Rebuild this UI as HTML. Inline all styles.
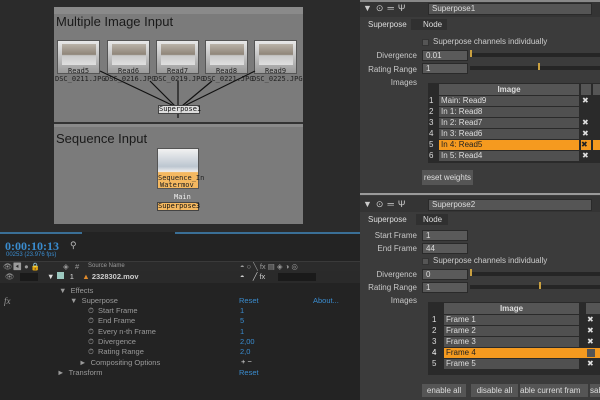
<!DOCTYPE html>
<html><head><style>
*{margin:0;padding:0;box-sizing:border-box}
body{width:600px;height:400px;overflow:hidden;background:#2e2e2e;font-family:"Liberation Sans",sans-serif;position:relative}
.a{position:absolute}
.t{position:absolute;white-space:nowrap}
.lbl{position:absolute;font-size:8px;color:#c8c8c8;text-align:right;width:60px;white-space:nowrap}
.fld{position:absolute;background:#5a5a5a;border:1px solid #2a2a2a;font-size:8px;color:#ddd;padding-left:3px;line-height:9px}
.thumb{position:absolute;width:43px;height:34px;background:linear-gradient(#e8e8e8,#9a9a9a);border:1px solid #555}
.thumb i{position:absolute;left:4px;top:3px;width:34px;height:21px;background:linear-gradient(#b9b2a8 0,#8f8579 50%,#c9c9c9 55%,#e0e0e0)}
.nl{position:absolute;font-family:"DejaVu Sans Mono",monospace;font-size:7px;color:#222;white-space:nowrap}
.row{position:absolute;height:10px;font-size:8px;color:#ddd;line-height:10px}
.ae{position:absolute;font-size:7.5px;color:#9a9a9a;white-space:nowrap}
.bl{color:#3a8ccf}
</style></head><body>
<!-- left top node graph -->
<div class="a" style="left:0;top:0;width:360px;height:232px;background:#2b2b2b"></div>
<div class="a" style="left:54px;top:7px;width:249px;height:115px;background:#7b7b7b;border-top:7px solid #8a8a8a"></div>
<div class="a" style="left:54px;top:122px;width:249px;height:2px;background:#333"></div>
<div class="a" style="left:54px;top:124px;width:249px;height:100px;background:#7b7b7b;border-top:3px solid #8a8a8a"></div>
<div class="t" style="left:56px;top:14px;font-size:13px;color:#1a1a1a">Multiple Image Input</div>
<div class="t" style="left:56px;top:131px;font-size:13px;color:#1a1a1a">Sequence Input</div>
<div class="thumb" style="left:57px;top:40px"><i></i></div>
<div class="thumb" style="left:107px;top:40px"><i></i></div>
<div class="thumb" style="left:156px;top:40px"><i></i></div>
<div class="thumb" style="left:205px;top:40px"><i></i></div>
<div class="thumb" style="left:254px;top:40px"><i></i></div>
<div class="nl" style="left:68px;top:67px">Read5</div>
<div class="nl" style="left:118px;top:67px">Read6</div>
<div class="nl" style="left:167px;top:67px">Read7</div>
<div class="nl" style="left:216px;top:67px">Read8</div>
<div class="nl" style="left:265px;top:67px">Read9</div>
<div class="nl" style="left:55px;top:75px">DSC_0211.JPG</div>
<div class="nl" style="left:105px;top:75px">DSC_0216.JPG</div>
<div class="nl" style="left:154px;top:75px">DSC_0219.JPG</div>
<div class="nl" style="left:203px;top:75px">DSC_0221.JPG</div>
<div class="nl" style="left:252px;top:75px">DSC_0225.JPG</div>
<svg class="a" style="left:0;top:0" width="360" height="232"><g stroke="#111" stroke-width="1.2"><line x1="100" y1="71" x2="174" y2="106"/><line x1="150" y1="81" x2="175" y2="106"/><line x1="178" y1="81" x2="178" y2="106"/><line x1="212" y1="81" x2="182" y2="106"/><line x1="255" y1="71" x2="184" y2="106"/><line x1="178" y1="113" x2="178" y2="118"/></g></svg>
<div class="a" style="left:158px;top:105px;width:42px;height:9px;background:#ddd;border:1px solid #444;font-size:7px;font-family:'DejaVu Sans Mono',monospace;color:#111;line-height:7px;text-align:center">Superpose1</div>
<div class="a" style="left:157px;top:148px;width:42px;height:41px;border:1px solid #555;background:linear-gradient(#f2f2f2 0,#bcc6d0 45%,#eee 58%,#f4b860 60%,#f4b860)"></div>
<div class="nl" style="left:158px;top:174px">Sequence_In</div>
<div class="nl" style="left:160px;top:181px">Watermov</div>
<div class="nl" style="left:174px;top:193px;color:#eee">Main</div>
<div class="a" style="left:157px;top:202px;width:42px;height:9px;background:#f4b860;border:1px solid #444;font-size:7px;font-family:'DejaVu Sans Mono',monospace;color:#111;line-height:7px;text-align:center">Superpose3</div>

<!-- bottom left AE -->
<div class="a" style="left:0;top:232px;width:360px;height:168px;background:#232323"></div>
<div class="a" style="left:0;top:232px;width:82px;height:2px;background:#3a6f96"></div>
<div class="a" style="left:175px;top:232px;width:185px;height:2px;background:#3a6f96"></div>
<div class="t bl" style="left:5px;top:239px;font-size:12px;font-weight:bold;font-family:'Liberation Serif',serif">0:00:10:13</div>
<div class="t bl" style="left:6px;top:252px;font-size:6px">00253 (23.976 fps)</div>
<div class="t" style="left:70px;top:240px;font-size:9px;color:#bbb">⚲</div>
<div class="a" style="left:0;top:261px;width:360px;height:10px;background:#2b2b2b;border-top:1px solid #3a3a3a"></div>
<div class="ae" style="left:3px;top:262px">👁◀ ● 🔒 &nbsp;&nbsp;&nbsp;&nbsp;&nbsp;&nbsp;&nbsp;&nbsp;&nbsp; ◈ &nbsp; #</div>
<div class="ae" style="left:88px;top:263px;font-size:6px">Source Name</div>
<div class="ae" style="left:240px;top:262px">◓ ○ ╲ fx ▤ ◈ ◑ ◎</div>
<div class="a" style="left:0;top:271px;width:360px;height:12px;background:#2a2a2a"></div>
<div class="a" style="left:20px;top:273px;width:18px;height:8px;background:#1a1a1a"></div>
<div class="ae" style="left:5px;top:272px">👁</div>
<div class="ae" style="left:47px;top:272px;color:#ddd">▼ <span style="display:inline-block;width:7px;height:7px;background:#9cc9c0"></span> &nbsp; 1 &nbsp;&nbsp; <span style="color:#e08a2a">▲</span> <b style="color:#ccc">2328302.mov</b></div>
<div class="ae" style="left:240px;top:272px;color:#ccc">◓ &nbsp;&nbsp; ╱ fx</div>
<div class="a" style="left:278px;top:273px;width:38px;height:8px;background:#1a1a1a"></div>
<div class="ae" style="left:59px;top:286px">▼ &nbsp;Effects</div>
<div class="ae" style="left:4px;top:296px;font-style:italic;font-family:'Liberation Serif',serif;font-size:9px">fx</div>
<div class="ae" style="left:70px;top:296px">▼ &nbsp;Superpose</div>
<div class="ae bl" style="left:239px;top:296px">Reset</div>
<div class="ae bl" style="left:313px;top:296px">About...</div>
<div class="ae" style="left:88px;top:306px">⏱ &nbsp;Start Frame</div><div class="ae bl" style="left:240px;top:306px">1</div>
<div class="ae" style="left:88px;top:316px">⏱ &nbsp;End Frame</div><div class="ae bl" style="left:240px;top:316px">5</div>
<div class="ae" style="left:88px;top:327px">⏱ &nbsp;Every n-th Frame</div><div class="ae bl" style="left:240px;top:327px">1</div>
<div class="ae" style="left:88px;top:337px">⏱ &nbsp;Divergence</div><div class="ae bl" style="left:240px;top:337px">2,00</div>
<div class="ae" style="left:88px;top:347px">⏱ &nbsp;Rating Range</div><div class="ae bl" style="left:240px;top:347px">2,0</div>
<div class="ae" style="left:79px;top:358px">► &nbsp;Compositing Options</div><div class="ae" style="left:241px;top:357px;color:#ddd">+ −</div>
<div class="ae" style="left:57px;top:368px">► &nbsp;Transform</div><div class="ae bl" style="left:239px;top:368px">Reset</div>

<!-- right panels -->
<div class="a" style="left:360px;top:0;width:240px;height:193px;background:#3b3b3b"></div>
<div class="a" style="left:360px;top:193px;width:240px;height:2px;background:#9a9a9a"></div>
<div class="a" style="left:360px;top:195px;width:240px;height:205px;background:#3b3b3b"></div>

<!-- panel 1 -->
<div class="a" style="left:360px;top:0;width:240px;height:17px;background:#343434;border-top:2px solid #888"></div>
<div class="t" style="left:363px;top:3px;font-size:9px;color:#ccc;letter-spacing:4px">▼⊙═Ψ</div>
<div class="fld" style="left:428px;top:3px;width:164px;height:12px;background:#555;line-height:10px">Superpose1</div>
<div class="a" style="left:411px;top:19px;width:36px;height:11px;background:#303030"></div>
<div class="t" style="left:368px;top:20px;font-size:8px;color:#ddd">Superpose</div>
<div class="t" style="left:423px;top:20px;font-size:8px;color:#ddd">Node</div>
<div class="a" style="left:422px;top:39px;width:7px;height:7px;background:#555;border:1px solid #333"></div>
<div class="t" style="left:433px;top:37px;font-size:8px;color:#ccc">Superpose channels individually</div>
<div class="lbl" style="left:357px;top:51px">Divergence</div>
<div class="fld" style="left:422px;top:50px;width:46px;height:11px">0.01</div>
<div class="lbl" style="left:357px;top:65px">Rating Range</div>
<div class="fld" style="left:422px;top:63px;width:46px;height:11px">1</div>
<div class="a" style="left:470px;top:53px;width:130px;height:4px;background:#252525"></div>
<div class="a" style="left:470px;top:66px;width:130px;height:4px;background:#252525"></div>
<div class="a" style="left:470px;top:50px;width:2px;height:7px;background:#c9a040"></div>
<div class="a" style="left:538px;top:63px;width:2px;height:7px;background:#c9a040"></div>
<div class="lbl" style="left:357px;top:78px">Images</div>
<div class="a" style="left:428px;top:83px;width:172px;height:80px;background:#2a2a2a"></div>
<div class="a" style="left:439px;top:84px;width:140px;height:11px;background:#555;font-size:8px;color:#ddd;text-align:center;font-weight:bold;line-height:11px">Image</div>
<div class="a" style="left:581px;top:84px;width:10px;height:11px;background:#555"></div>
<div class="a" style="left:593px;top:84px;width:7px;height:11px;background:#555"></div>
<div class="row" style="left:429px;top:96px">1</div><div class="row" style="left:439px;top:96px;width:140px;background:#505050;padding-left:2px">Main: Read9</div><div class="row" style="left:582px;top:96px">✖</div>
<div class="row" style="left:429px;top:107px">2</div><div class="row" style="left:439px;top:107px;width:140px;background:#505050;padding-left:2px">In 1: Read8</div>
<div class="row" style="left:429px;top:118px">3</div><div class="row" style="left:439px;top:118px;width:140px;background:#505050;padding-left:2px">In 2: Read7</div><div class="row" style="left:582px;top:118px">✖</div>
<div class="row" style="left:429px;top:129px">4</div><div class="row" style="left:439px;top:129px;width:140px;background:#505050;padding-left:2px">In 3: Read6</div><div class="row" style="left:582px;top:129px">✖</div>
<div class="row" style="left:429px;top:140px">5</div><div class="row" style="left:439px;top:140px;width:140px;background:#f59a1f;color:#222;padding-left:2px">In 4: Read5</div><div class="row" style="left:581px;top:140px;width:10px;background:#f59a1f;color:#222">✖</div><div class="row" style="left:593px;top:140px;width:7px;background:#f59a1f"></div>
<div class="row" style="left:429px;top:151px">6</div><div class="row" style="left:439px;top:151px;width:140px;background:#505050;padding-left:2px">In 5: Read4</div><div class="row" style="left:582px;top:151px">✖</div>
<div class="a" style="left:422px;top:170px;width:51px;height:15px;background:#555;font-size:8px;color:#ddd;text-align:center;line-height:15px">reset weights</div>

<!-- panel 2 -->
<div class="a" style="left:360px;top:196px;width:240px;height:16px;background:#343434"></div>
<div class="t" style="left:363px;top:199px;font-size:9px;color:#ccc;letter-spacing:4px">▼⊙═Ψ</div>
<div class="fld" style="left:428px;top:199px;width:164px;height:12px;background:#555;line-height:10px">Superpose2</div>
<div class="a" style="left:416px;top:214px;width:32px;height:11px;background:#303030"></div>
<div class="t" style="left:368px;top:215px;font-size:8px;color:#ddd">Superpose</div>
<div class="t" style="left:423px;top:215px;font-size:8px;color:#ddd">Node</div>
<div class="lbl" style="left:357px;top:231px">Start Frame</div>
<div class="fld" style="left:422px;top:230px;width:46px;height:11px">1</div>
<div class="lbl" style="left:357px;top:244px">End Frame</div>
<div class="fld" style="left:422px;top:243px;width:46px;height:11px">44</div>
<div class="a" style="left:422px;top:258px;width:7px;height:7px;background:#555;border:1px solid #333"></div>
<div class="t" style="left:433px;top:256px;font-size:8px;color:#ccc">Superpose channels individually</div>
<div class="lbl" style="left:357px;top:270px">Divergence</div>
<div class="fld" style="left:422px;top:269px;width:46px;height:11px">0</div>
<div class="lbl" style="left:357px;top:283px">Rating Range</div>
<div class="fld" style="left:422px;top:282px;width:46px;height:11px">1</div>
<div class="a" style="left:470px;top:272px;width:130px;height:4px;background:#252525"></div>
<div class="a" style="left:470px;top:285px;width:130px;height:4px;background:#252525"></div>
<div class="a" style="left:470px;top:269px;width:2px;height:7px;background:#c9a040"></div>
<div class="a" style="left:539px;top:282px;width:2px;height:7px;background:#c9a040"></div>
<div class="lbl" style="left:357px;top:296px">Images</div>
<div class="a" style="left:428px;top:302px;width:172px;height:73px;background:#2a2a2a"></div>
<div class="a" style="left:444px;top:303px;width:135px;height:11px;background:#555;font-size:8px;color:#ddd;text-align:center;font-weight:bold;line-height:11px">Image</div>
<div class="a" style="left:586px;top:303px;width:14px;height:11px;background:#555"></div>
<div class="row" style="left:432px;top:315px">1</div><div class="row" style="left:444px;top:315px;width:135px;background:#505050;padding-left:2px">Frame 1</div><div class="row" style="left:587px;top:315px">✖</div>
<div class="row" style="left:432px;top:326px">2</div><div class="row" style="left:444px;top:326px;width:135px;background:#505050;padding-left:2px">Frame 2</div><div class="row" style="left:587px;top:326px">✖</div>
<div class="row" style="left:432px;top:337px">3</div><div class="row" style="left:444px;top:337px;width:135px;background:#505050;padding-left:2px">Frame 3</div><div class="row" style="left:587px;top:337px">✖</div>
<div class="row" style="left:432px;top:348px;color:#fff">4</div><div class="row" style="left:444px;top:348px;width:156px;background:#f59a1f;color:#222;padding-left:2px">Frame 4</div><div class="a" style="left:587px;top:349px;width:8px;height:8px;background:#555"></div>
<div class="row" style="left:432px;top:359px">5</div><div class="row" style="left:444px;top:359px;width:135px;background:#505050;padding-left:2px">Frame 5</div><div class="row" style="left:587px;top:359px">✖</div>
<div class="a" style="left:422px;top:384px;width:44px;height:13px;background:#555;font-size:8px;color:#ddd;text-align:center;line-height:13px">enable all</div>
<div class="a" style="left:471px;top:384px;width:47px;height:13px;background:#555;font-size:8px;color:#ddd;text-align:center;line-height:13px">disable all</div>
<div class="a" style="left:520px;top:384px;width:68px;height:13px;background:#555;font-size:8px;color:#ddd;line-height:13px;overflow:hidden;white-space:nowrap">able current fram</div>
<div class="a" style="left:590px;top:384px;width:10px;height:13px;background:#555;font-size:8px;color:#ddd;line-height:13px;overflow:hidden">sab</div>
</body></html>
